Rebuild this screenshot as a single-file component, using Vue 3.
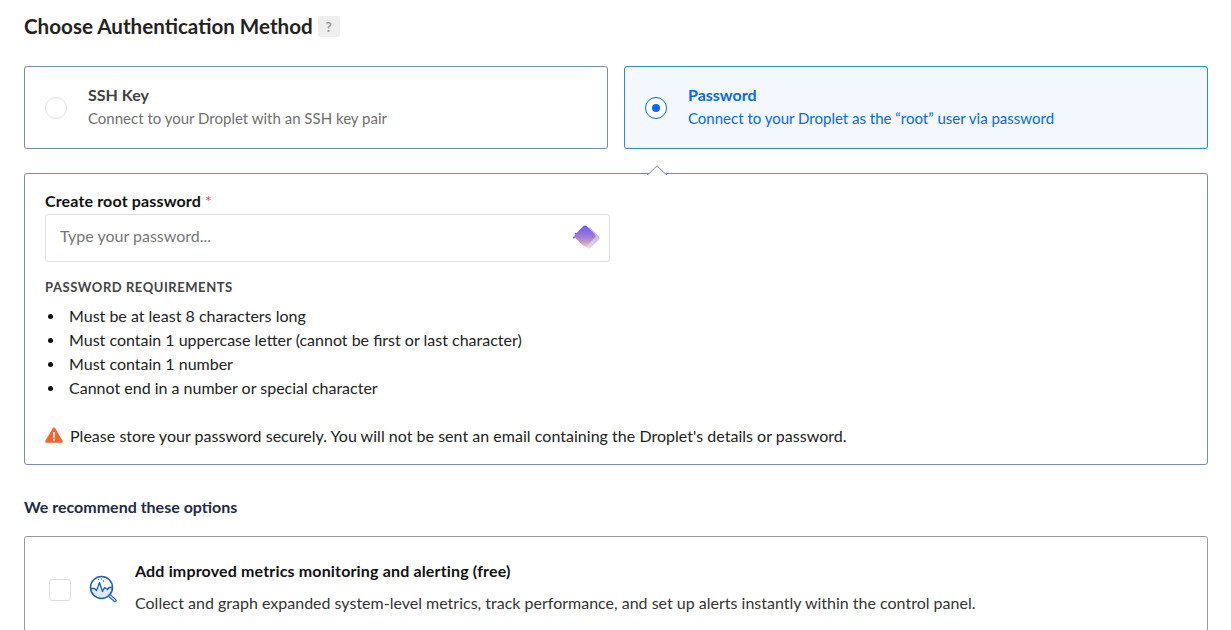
<script setup>
const requirements = [
  'Must be at least 8 characters long',
  'Must contain 1 uppercase letter (cannot be first or last character)',
  'Must contain 1 number',
  'Cannot end in a number or special character',
]
</script>

<template>
  <main class="page">
    <header class="title-row">
      <h2>Choose Authentication Method</h2>
      <span class="help">?</span>
    </header>

    <div class="methods">
      <div class="method">
        <span class="radio"></span>
        <div class="method-text">
          <div class="method-name">SSH Key</div>
          <div class="method-desc">Connect to your Droplet with an SSH key pair</div>
        </div>
      </div>
      <div class="method active">
        <span class="radio on"><i></i></span>
        <div class="method-text">
          <div class="method-name">Password</div>
          <div class="method-desc">Connect to your Droplet as the “root” user via password</div>
        </div>
      </div>
    </div>

    <section class="panel">
      <svg class="caret" width="20" height="10" viewBox="0 0 20 10">
        <path d="M0 9.5 H1 L10 .8 L19 9.5 H20" fill="#fff" stroke="#7b8bae" />
      </svg>
      <label class="field-label">Create root password <em>*</em></label>
      <div class="input">
        <span class="placeholder">Type your password...</span>
        <svg class="gem" width="28" height="28" viewBox="0 0 28 28">
          <defs>
            <linearGradient id="gemFront" x1="0" y1="0" x2="1" y2="1">
              <stop offset="0" stop-color="#6a58f2" />
              <stop offset="0.55" stop-color="#a47bdc" />
              <stop offset="1" stop-color="#efc6b4" />
            </linearGradient>
            <linearGradient id="gemBack" x1="0" y1="0" x2="1" y2="1">
              <stop offset="0" stop-color="#c4b8fa" />
              <stop offset="0.6" stop-color="#cfc0f0" />
              <stop offset="1" stop-color="#f7e0c8" />
            </linearGradient>
          </defs>
          <rect x="8.750" y="6.750" width="16.500" height="16.500" rx="3" transform="rotate(45 17 15)" fill="url(#gemBack)" />
          <rect x="4.750" y="4.750" width="16.500" height="16.500" rx="3" transform="rotate(45 13 13)" fill="url(#gemFront)" />
          <circle cx="2" cy="14.500" r="0.9" fill="#4b5a9a" />
          <circle cx="3.500" cy="10.500" r="0.8" fill="#4b5a9a" />
        </svg>
      </div>
      <h4 class="req-title">PASSWORD REQUIREMENTS</h4>
      <ul class="req-list">
        <li v-for="item in requirements" :key="item">{{ item }}</li>
      </ul>
      <p class="warning">
        <svg width="18" height="16" viewBox="0 0 18 16">
          <path d="M9 .5c.5 0 .9.3 1.200.7l7.400 12.600c.5.9-.1 2-1.200 2H1.600c-1.100 0-1.700-1.100-1.200-2L7.800 1.200C8.100.8 8.500.5 9 .5z" fill="#f5652b" />
          <rect x="8.100" y="5" width="1.800" height="5.500" rx=".6" fill="#fff" />
          <circle cx="9" cy="12.700" r="1.100" fill="#fff" />
        </svg>
        <span>Please store your password securely. You will not be sent an email containing the Droplet's details or password.</span>
      </p>
    </section>

    <h3 class="rec-title">We recommend these options</h3>

    <section class="option">
      <span class="checkbox"></span>
      <svg class="metric" width="30" height="30" viewBox="0 0 30 30" fill="none">
        <path d="M2 13.500 H5.500 L7.500 15.500 L10.500 7.500 L13.500 16.500 L15.500 12.500 L18.500 14.500 L20 12.500 H23 A10.500 10.500 0 0 1 2 13.500 Z" fill="#dbe9f9" />
        <circle cx="12.500" cy="12.500" r="11" stroke="#1f5fae" stroke-width="1.500" />
        <path d="M2 13.500 H5.500 L7.500 15.500 L10.500 7.500 L13.500 16.500 L15.500 12.500 L18.500 14.500 L20 12.500 H23" stroke="#1f5fae" stroke-width="1.300" stroke-linejoin="round" />
        <path d="M9.500 4.500v.01M12.500 3.800v.01M14.500 6v.01" stroke="#1f5fae" stroke-width="1.300" stroke-linecap="round" />
        <path d="M21 21 L26 25.500" stroke="#1f5fae" stroke-width="3.600" stroke-linecap="round" />
        <path d="M21 21 L26 25.500" stroke="#dbe9f9" stroke-width="1.200" stroke-linecap="round" />
      </svg>
      <div>
        <div class="option-name">Add improved metrics monitoring and alerting (free)</div>
        <div class="option-desc">Collect and graph expanded system-level metrics, track performance, and set up alerts instantly within the control panel.</div>
      </div>
    </section>
  </main>
</template>

<style>
html, body { margin: 0; height: 630px; overflow: hidden; background: #fff; }
</style>

<style scoped>
.page {
  box-sizing: border-box;
  width: 1231px;
  padding: 0 23px 0 24px;
  font-family: Lato, "Open Sans", "Liberation Sans", sans-serif;
  font-size: 16px;
  color: #1c1c1c;
}
.title-row { display: flex; align-items: center; gap: 5px; height: 53px; }
h2 { margin: 0 0 2px; font-size: 20.6px; font-weight: 700; color: #24221f; }
.help {
  width: 22px; height: 21px; border-radius: 2px; background: #eee; color: #999;
  font-size: 14px; font-weight: 700; display: flex; align-items: center; justify-content: center;
}
.methods { display: flex; gap: 16px; margin-top: 13px; }
.method {
  box-sizing: border-box; flex: 1; height: 83px; display: flex; align-items: center;
  border: 1px solid #7b8bae; border-radius: 3px; padding-left: 20px; gap: 21px; color: #6f6f6f;
}
.method.active { border-color: #2f86eb; background: #f3f8ff; color: #0069ff; }
.radio {
  box-sizing: border-box; width: 22px; height: 22px; border-radius: 50%; border: 1px solid #ddd; background: #fff;
  display: flex; align-items: center; justify-content: center; flex: none;
}
.radio.on { border-color: #0069ff; }
.radio i { width: 8px; height: 8px; border-radius: 50%; background: #0069ff; }
.method-text { padding-bottom: 2px; }
.method-name { font-weight: 700; color: #3f3f3f; line-height: 23px; }
.active .method-name { color: #0069ff; }
.method-desc { font-size: 15px; line-height: 23px; margin-top: 1px; }
.panel {
  position: relative; box-sizing: border-box; height: 292px; margin-top: 24px;
  border: 1px solid #7b8bae; border-radius: 3px; padding: 17px 20px 0;
}
.caret { position: absolute; left: 622px; top: -9px; }
.field-label { display: block; font-weight: 700; color: #111; line-height: 20px; letter-spacing: 0.15px; }
.field-label em { color: #e0533a; font-style: normal; font-weight: 400; }
.input {
  box-sizing: border-box; width: 565px; height: 48px; margin-top: 3px; border: 1px solid #ddd; border-radius: 3px;
  display: flex; align-items: center; justify-content: space-between; padding: 0 9px 0 14px;
}
.placeholder { color: #767676; position: relative; top: -3px; }
.gem { position: relative; top: -1px; }
.req-title { margin: 17px 0 0; font-size: 13px; font-weight: 700; letter-spacing: 0.55px; color: #444; line-height: 16px; }
.req-list { margin: 9px 0 0; padding: 0 0 0 3px; color: #222; list-style: none; }
.req-list li { line-height: 24px; display: flex; align-items: center; gap: 16px; }
.req-list li::before { content: ""; width: 5px; height: 5px; border-radius: 50%; background: #111; flex: none; }
.warning { display: flex; align-items: center; gap: 7px; margin: 23px 0 0; height: 24px; color: #222; letter-spacing: 0.025px; }
.rec-title { margin: 32px 0 0; font-size: 16px; font-weight: 700; line-height: 20px; color: #1d2b45; }
.option {
  box-sizing: border-box; height: 120px; margin-top: 19px; display: flex; align-items: flex-start;
  border: 1px solid #999; border-radius: 3px; padding: 22px 20px 0 24px;
}
.checkbox {
  box-sizing: border-box; width: 22px; height: 22px; margin-top: 20px; border: 1px solid #ddd; border-radius: 3px; flex: none;
}
.metric { margin: 16px 16px 0 18px; flex: none; }
.option-name { font-weight: 700; color: #111; line-height: 24px; letter-spacing: 0.16px; }
.option-desc { color: #333; line-height: 24px; margin-top: 8px; }
</style>
